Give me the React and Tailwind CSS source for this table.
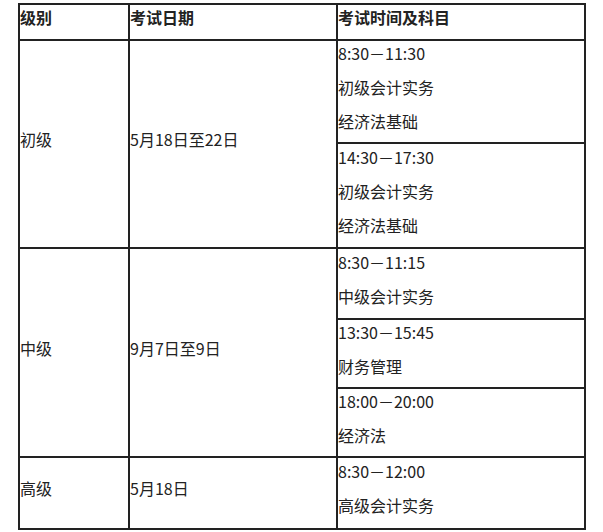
import React from "react";

// exam schedule table: 3 columns, nested time slots in the last column
const FONT = { fontFamily: '"Noto Sans CJK SC", "Noto Sans CJK JP", sans-serif' };

function Cell({ lines, className = "", bold = false }) {
  return (
    <div className={`flex flex-col justify-center border-r-2 border-b-2 border-[#222] ${className}`}>
      {lines.map((t, i) => (
        <p key={i} className={`leading-[24px] mb-[10px] whitespace-nowrap ${bold ? "font-bold" : ""}`}>
          {t}
        </p>
      ))}
    </div>
  );
}

export default function App() {
  return (
    <div className="min-h-screen bg-white text-[16px] text-[#222]" style={FONT}>
      <div className="pt-[3px] pl-[18px]">
        <div className="grid w-[568px] grid-cols-[110px_208px_248px] grid-rows-[36px_103px_105px_71px_69px_69px_72px] border-l-2 border-t-2 border-[#222]">
          {/* header */}
          <Cell lines={["级别"]} bold />
          <Cell lines={["考试日期"]} bold />
          <Cell lines={["考试时间及科目"]} bold />

          {/* 初级 */}
          <Cell lines={["初级"]} className="row-span-2" />
          <Cell lines={["5月18日至22日"]} className="row-span-2" />
          <Cell lines={["8:30－11:30", "初级会计实务", "经济法基础"]} />
          <Cell lines={["14:30－17:30", "初级会计实务", "经济法基础"]} />

          {/* 中级 */}
          <Cell lines={["中级"]} className="row-span-3" />
          <Cell lines={["9月7日至9日"]} className="row-span-3" />
          <Cell lines={["8:30－11:15", "中级会计实务"]} />
          <Cell lines={["13:30－15:45", "财务管理"]} />
          <Cell lines={["18:00－20:00", "经济法"]} />

          {/* 高级 */}
          <Cell lines={["高级"]} />
          <Cell lines={["5月18日"]} />
          <Cell lines={["8:30－12:00", "高级会计实务"]} />
        </div>
      </div>
    </div>
  );
}
